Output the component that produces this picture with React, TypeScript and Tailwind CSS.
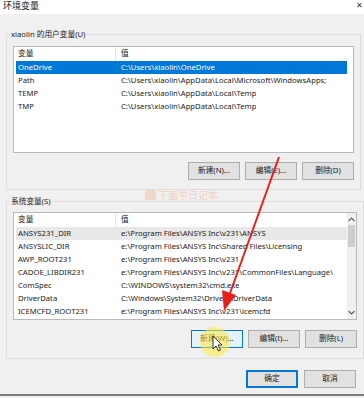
import React from "react";

const font = {
  fontFamily: '"Noto Sans", "Noto Sans CJK SC", sans-serif',
};

type Row = [string, string];

const userRows: Row[] = [
  ["OneDrive", "C:\\Users\\xiaolin\\OneDrive"],
  ["Path", "C:\\Users\\xiaolin\\AppData\\Local\\Microsoft\\WindowsApps;"],
  ["TEMP", "C:\\Users\\xiaolin\\AppData\\Local\\Temp"],
  ["TMP", "C:\\Users\\xiaolin\\AppData\\Local\\Temp"],
];

const sysRows: Row[] = [
  ["ANSYS231_DIR", "e:\\Program Files\\ANSYS Inc\\v231\\ANSYS"],
  ["ANSYSLIC_DIR", "e:\\Program Files\\ANSYS Inc\\Shared Files\\Licensing"],
  ["AWP_ROOT231", "e:\\Program Files\\ANSYS Inc\\v231"],
  ["CADOE_LIBDIR231", "e:\\Program Files\\ANSYS Inc\\v231\\CommonFiles\\Language\\"],
  ["ComSpec", "C:\\WINDOWS\\system32\\cmd.exe"],
  ["DriverData", "C:\\Windows\\System32\\Drivers\\DriverData"],
  ["ICEMCFD_ROOT231", "e:\\Program Files\\ANSYS Inc\\v231\\icemcfd"],
];

function Header() {
  return (
    <div className="flex h-[14px] items-center text-[7.7px] text-[#1a1a1a] ml-[2px]">
      <div className="w-[100px] pl-[2px] border-r border-[#e5e5e5] h-full flex items-center">变量</div>
      <div className="pl-[5px]">值</div>
    </div>
  );
}

function ListRow({ row, selected, hover }: { row: Row; selected?: boolean; hover?: boolean }) {
  const bg = selected ? "bg-[#0078d7] text-white" : hover ? "bg-[#e8e8e8] text-[#1a1a1a]" : "text-[#1a1a1a]";
  return (
    <div className={`flex h-[13px] items-center w-[331px] ml-[2px] whitespace-nowrap text-[7.7px] ${bg}`}>
      <div className="w-[100px] pl-[2px] shrink-0">{row[0]}</div>
      <div className="pl-[5px] overflow-hidden">{row[1]}</div>
    </div>
  );
}

function Btn({ label, variant }: { label: string; variant?: "default" | "hover" }) {
  const cls =
    variant === "default"
      ? "border-2 border-[#0078d7] bg-[#e1e1e1]"
      : variant === "hover"
      ? "border border-[#0078d7] bg-[#e5f1fb]"
      : "border border-[#adadad] bg-[#e1e1e1]";
  return (
    <div className={`h-[18px] w-[52px] flex items-center justify-center text-[7.7px] text-[#1a1a1a] ${cls}`}>
      {label}
    </div>
  );
}

function ChevronUp() {
  return (
    <svg width="7" height="5" viewBox="0 0 7 5">
      <path d="M0.5 4 L3.5 1 L6.5 4" fill="none" stroke="#606060" strokeWidth="1.1" />
    </svg>
  );
}
function ChevronDown() {
  return (
    <svg width="7" height="5" viewBox="0 0 7 5">
      <path d="M0.5 1 L3.5 4 L6.5 1" fill="none" stroke="#606060" strokeWidth="1.1" />
    </svg>
  );
}

export default function App() {
  return (
    <div className="relative w-[364px] h-[398px] overflow-hidden bg-[#f0f0f0] flex flex-col" style={font}>
      {/* title bar */}
      <div className="h-[14px] bg-white flex items-start justify-between shrink-0 overflow-hidden">
        <div className="text-[9px] leading-[11px] pl-[3px] text-[#1a1a1a]">环境变量</div>
        <div className="text-[8px] leading-[10px] pr-[1px] text-[#333]">✕</div>
      </div>

      {/* user group */}
      <fieldset className="mt-[14px] ml-[6px] mr-[3px] border border-[#dcdcdc] shrink-0">
        <legend className="ml-[3px] px-[1px] text-[7.7px] leading-[12px] text-[#1a1a1a]">xiaolin 的用户变量(U)</legend>
        <div className="px-[6px] pb-[9px]">
          <div className="mt-[6px] h-[107px] bg-white border border-[#b9b9b9] overflow-hidden">
            <Header />
            {userRows.map((r, i) => (
              <ListRow key={r[0]} row={r} selected={i === 0} />
            ))}
          </div>
          <div className="mt-[9px] flex justify-end gap-[5px]">
            <Btn label="新建(N)..." />
            <Btn label="编辑(E)..." />
            <Btn label="删除(D)" />
          </div>
        </div>
      </fieldset>

      {/* system group */}
      <fieldset className="mt-[5px] ml-[6px] mr-[3px] border border-[#dcdcdc] shrink-0">
        <legend className="ml-[3px] px-[1px] text-[7.7px] leading-[12px] text-[#1a1a1a]">系统变量(S)</legend>
        <div className="px-[6px] pb-[10px]">
          <div className="mt-[5px] h-[108px] bg-white border border-[#b9b9b9] overflow-hidden flex">
            <div className="flex-1 overflow-hidden">
              <Header />
              {sysRows.map((r, i) => (
                <ListRow key={r[0]} row={r} hover={i === 0} />
              ))}
            </div>
            <div className="w-[9px] bg-[#f0f0f0] flex flex-col items-center">
              <div className="h-[11px] flex items-center justify-center mt-[1px]">
                <ChevronUp />
              </div>
              <div className="w-[7px] h-[22px] bg-[#cdcdcd]" />
              <div className="flex-1" />
              <div className="h-[11px] flex items-center justify-center mb-[1px]">
                <ChevronDown />
              </div>
            </div>
          </div>
          <div className="mt-[10px] flex justify-end gap-[5px]">
            <Btn label="新建(W)..." variant="hover" />
            <Btn label="编辑(I)..." />
            <Btn label="删除(L)" />
          </div>
        </div>
      </fieldset>

      {/* bottom buttons */}
      <div className="mt-[11px] flex justify-end gap-[6px] pr-[8px]">
        <Btn label="确定" variant="default" />
        <Btn label="取消" />
      </div>
      <div className="flex-1" />
      <div className="h-[2px] bg-[#7a7a7a] mb-[2px]" />

      {/* watermark */}
      <div className="absolute left-[145px] top-[190px] flex items-center gap-[2px] opacity-30 pointer-events-none">
        <div className="w-[11px] h-[10px] rounded-[2px] bg-[#f5a070]" />
        <div className="text-[10px] text-[#f08a50] leading-none">下面学日记本</div>
      </div>

      {/* annotation overlay */}
      <svg className="absolute inset-0 pointer-events-none" width="364" height="398" viewBox="0 0 364 398">
        <circle cx="215" cy="342" r="15" fill="rgba(255,235,60,0.55)" />
        <line x1="279" y1="157" x2="229" y2="296" stroke="#e8201a" strokeWidth="2" />
        <polygon points="224,311 236,295 222,290" fill="#e8201a" />
        <path d="M213 336 L213 349 L216 346 L218.5 351 L220.5 350 L218 345 L222 345 Z" fill="white" stroke="black" strokeWidth="0.8" />
      </svg>
    </div>
  );
}
